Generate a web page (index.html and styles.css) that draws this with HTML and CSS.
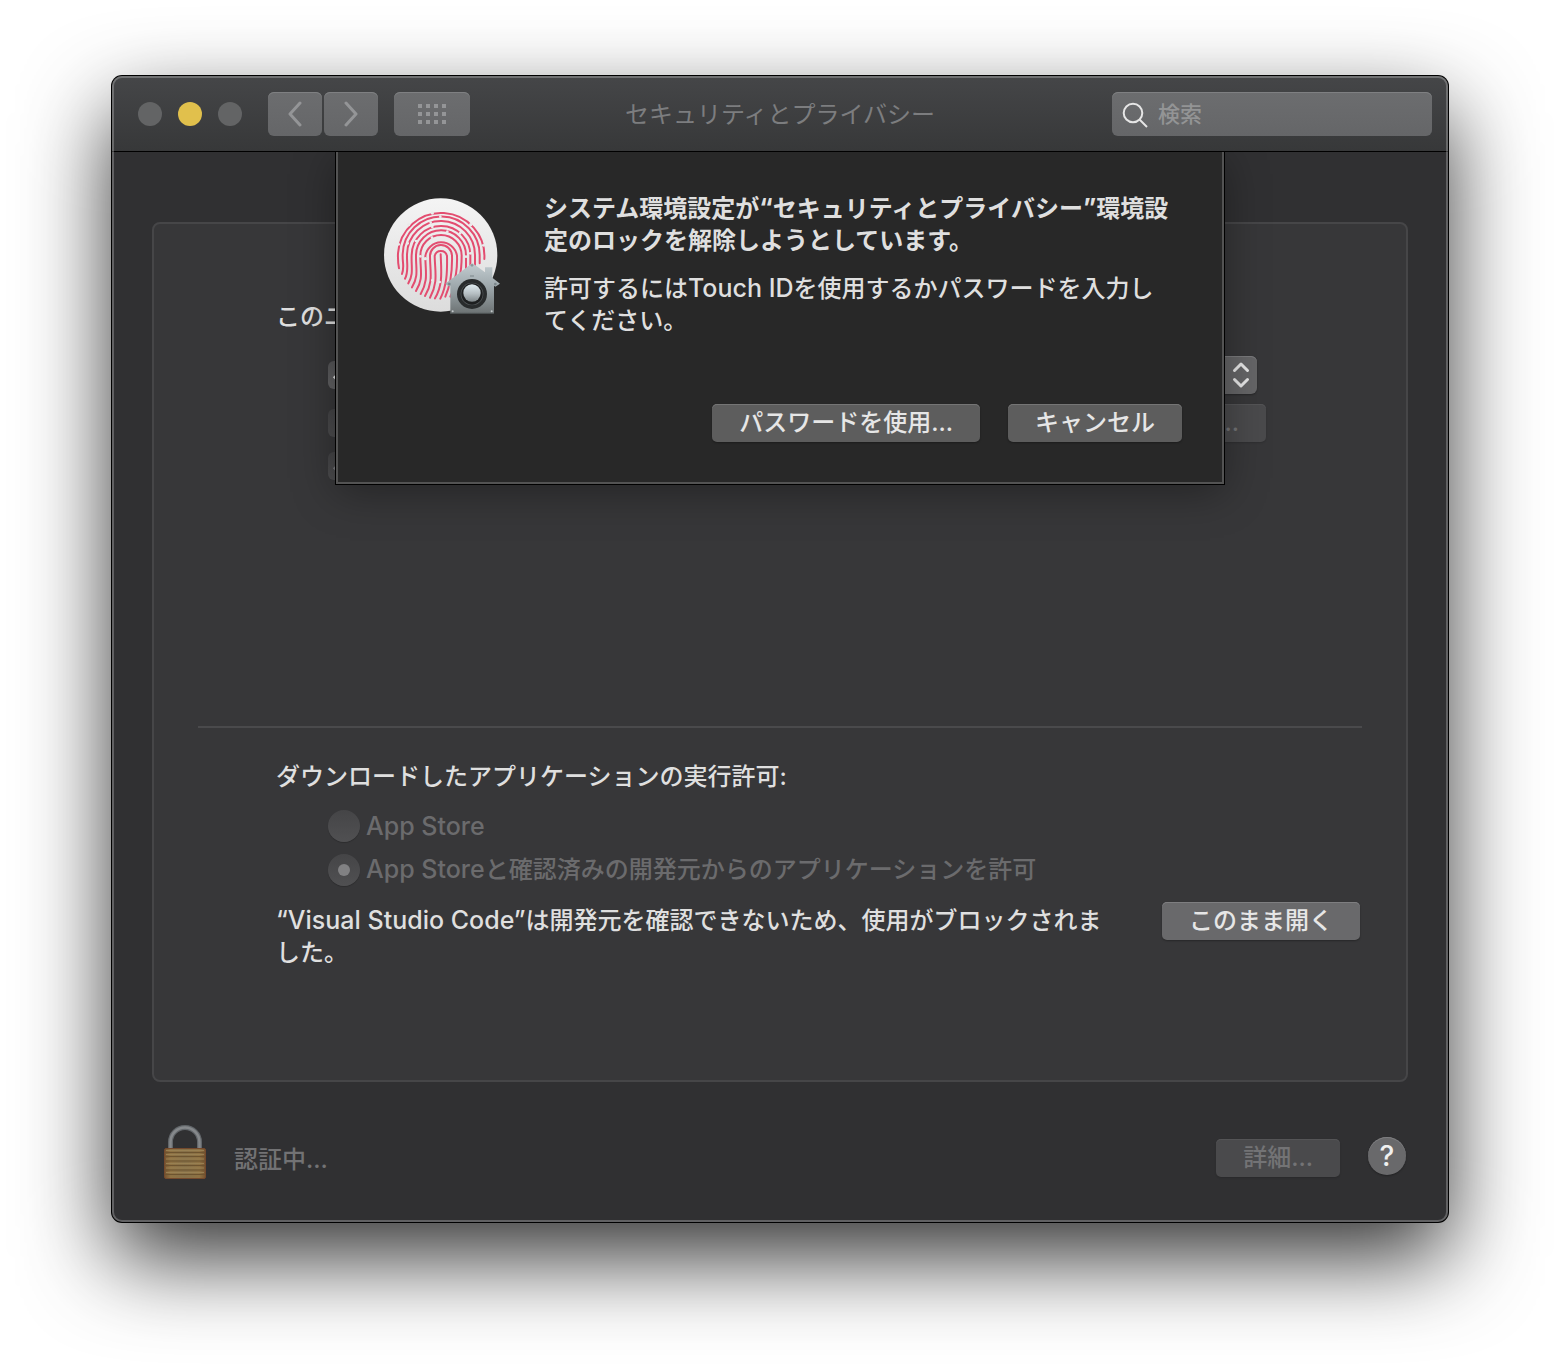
FILE: index.html
```html
<!DOCTYPE html>
<html lang="ja">
<head>
    <meta charset="UTF-8">
    <meta name="viewport" content="width=device-width, initial-scale=1.0">
    <title>セキュリティとプライバシー</title>
    <link rel="stylesheet" href="styles.css">
</head>
<body>
    <main class="window">
        <header class="titlebar">
            <div class="controls">
                <div class="lights">
                    <button class="light" aria-label="閉じる"></button>
                    <button class="light yellow" aria-label="しまう"></button>
                    <button class="light" aria-label="拡大"></button>
                </div>
                <div class="nav">
                    <button class="tool" aria-label="戻る">
                        <svg width="16" height="26" viewBox="0 0 16 26"><path d="M13 2 L3 13 L13 24" /></svg>
                    </button>
                    <button class="tool" aria-label="進む">
                        <svg width="16" height="26" viewBox="0 0 16 26"><path d="M3 2 L13 13 L3 24" /></svg>
                    </button>
                </div>
                <button class="tool wide" aria-label="すべてを表示">
                    <svg width="28" height="20" viewBox="0 0 28 20">
                        <path class="dots" d="M0 0h4v4h-4z M8 0h4v4h-4z M16 0h4v4h-4z M24 0h4v4h-4z M0 8h4v4h-4z M8 8h4v4h-4z M16 8h4v4h-4z M24 8h4v4h-4z M0 16h4v4h-4z M8 16h4v4h-4z M16 16h4v4h-4z M24 16h4v4h-4z" />
                    </svg>
                </button>
            </div>
            <h1>セキュリティとプライバシー</h1>
            <label class="search">
                <svg width="28" height="28" viewBox="0 0 28 28"><circle cx="11" cy="13" r="9.3" /><path d="M17.500 19.500 L25 27" /></svg>
                <input type="search" placeholder="検索" aria-label="検索">
            </label>
        </header>

        <div class="content">
            <section class="panel">
                <div class="login">
                    <p>このユーザ</p>
                    <div class="row">
                        <input type="checkbox" class="check" aria-label="パスワードを要求" checked>
                        <div class="select">
                            <select aria-label="時間"><option></option></select>
                            <svg width="18" height="28" viewBox="0 0 18 28"><path d="M2.5 9.500 L9 3 L15.500 9.500 M2.500 18.500 L9 25 L15.500 18.500" /></svg>
                        </div>
                    </div>
                    <div class="row message-row">
                        <input type="checkbox" class="check" aria-label="メッセージを表示" disabled>
                        <button class="button" aria-label="メッセージを設定" disabled>...</button>
                    </div>
                    <div class="row">
                        <input type="checkbox" class="check" aria-label="自動ログインを使用不可にする" checked disabled>
                    </div>
                </div>

                <hr>

                <div class="download">
                    <p>ダウンロードしたアプリケーションの実行許可:</p>
                    <div class="radios">
                        <label class="radio"><input type="radio" name="source" disabled><span class="latin">App Store</span></label>
                        <label class="radio"><input type="radio" name="source" checked disabled><span><span class="latin">App Store</span>と確認済みの開発元からのアプリケーションを許可</span></label>
                    </div>
                    <div class="blocked">
                        <p><span class="latin">“Visual Studio Code”</span>は開発元を確認できないため、使用がブロックされました。</p>
                        <button class="button open">このまま開く</button>
                    </div>
                </div>
            </section>

            <footer>
                <svg class="lock" width="46" height="56" viewBox="0 0 46 56">
                    <defs>
                        <linearGradient id="brass" x1="0" y1="0" x2="1" y2="0">
                            <stop offset="0" stop-color="#76522f" />
                            <stop offset="0.15" stop-color="#8f7243" />
                            <stop offset="0.5" stop-color="#857049" />
                            <stop offset="0.85" stop-color="#8f7243" />
                            <stop offset="1" stop-color="#76522f" />
                        </linearGradient>
                    </defs>
                    <path d="M8.500 26 V18 A14.500 14.500 0 0 1 37.500 18 V26" fill="none" stroke="#62666a" stroke-width="5" />
                    <path d="M8.500 26 V18 A14.500 14.500 0 0 1 37.500 18 V26" fill="none" stroke="#85888b" stroke-width="2.500" />
                    <rect x="2.500" y="24.500" width="41" height="30" rx="1.500" fill="url(#brass)" stroke="#74492c" stroke-width="1" />
                    <path d="M3 28.500H43 M3 32.500H43 M3 37H43 M3 41.500H43 M3 46H43 M3 50.500H43" stroke="#6d5430" stroke-width="1.200" />
                    <path d="M4 26.500H42 M4 30.500H42 M4 35H42 M4 39.500H42 M4 44H42 M4 48.500H42" stroke="#988052" stroke-width="1" />
                </svg>
                <span class="status">認証中...</span>
                <button class="button details" disabled>詳細...</button>
                <button class="help" aria-label="ヘルプ">?</button>
            </footer>

            <div class="sheet" role="dialog" aria-labelledby="sheetTitle">
                <div class="sheet-body">
                    <svg class="touch-id" width="120" height="120" viewBox="36 33 360 360">
                        <defs>
                            <linearGradient id="disc" x1="0" y1="0" x2="0" y2="1">
                                <stop offset="0" stop-color="#f4f4f4" />
                                <stop offset="1" stop-color="#dcdcdc" />
                            </linearGradient>
                            <linearGradient id="house" x1="0" y1="0" x2="0" y2="1">
                                <stop offset="0" stop-color="#c3cdd1" />
                                <stop offset="0.5" stop-color="#9ba5a9" />
                                <stop offset="1" stop-color="#6c7273" />
                            </linearGradient>
                            <linearGradient id="knob" x1="0" y1="0" x2="0" y2="1">
                                <stop offset="0" stop-color="#e0ecf1" />
                                <stop offset="0.55" stop-color="#b4bdc1" />
                                <stop offset="1" stop-color="#7f878a" />
                            </linearGradient>
                        </defs>
                        <circle cx="212" cy="210" r="170" fill="url(#disc)" />
                        <g class="ridges">
                            <path d="M87 250 Q83 230 84 205 A128 128 0 0 1 343 222" />
                            <path d="M96 267 C104 245 97 235 98 208 A115 115 0 0 1 329 212 V235" />
                            <path d="M105 281 C117 258 110 240 111 208 A102 102 0 0 1 315 212 V245" />
                            <path d="M115 295 C132 265 123 245 125 210 A88 88 0 0 1 301 212 V250" />
                            <path d="M126 307 C147 272 137 250 138 210 A75 75 0 0 1 288 212 V260" />
                            <path d="M138 318 C161 280 151 260 151 212 A62 62 0 0 1 275 212 C275 240 273 260 268 280" />
                            <path d="M152 327 C176 286 166 260 166 214 A48 48 0 0 1 261 212 C262 245 260 275 248 300" />
                            <path d="M165 333 C191 290 180 260 180 214 A33 33 0 0 1 246 212 C247 250 246 290 226 335" />
                            <path d="M180 338 C205 292 195 262 194 213 A19 19 0 0 1 231 213 C232 260 231 300 211 341" />
                            <path d="M195 340 C219 300 214 260 212 208" />
                            <path d="M241 335 L252 310" />
                        </g>
                        <g fill="#ebebeb">
                            <circle cx="187" cy="84" r="5" />
                            <circle cx="116" cy="119" r="5" />
                            <circle cx="302" cy="119" r="5" />
                            <circle cx="211" cy="95" r="4" />
                            <circle cx="182" cy="113" r="4" />
                            <circle cx="113" cy="175" r="4" />
                            <circle cx="86" cy="178" r="4" />
                            <circle cx="138" cy="168" r="4" />
                            <circle cx="187" cy="126" r="4" />
                            <circle cx="232" cy="140" r="4" />
                            <circle cx="186" cy="158" r="4" />
                            <circle cx="166" cy="221" r="5" />
                            <circle cx="151" cy="214" r="4" />
                            <circle cx="270" cy="145" r="4" />
                            <circle cx="301" cy="205" r="4" />
                            <circle cx="288" cy="215" r="4" />
                            <circle cx="340" cy="181" r="4" />
                            <circle cx="209" cy="291" r="4" />
                            <circle cx="187" cy="286" r="4" />
                        </g>
                        <path d="M307 234 L345 262 V247 H367 V278 L390 296 L376 305 L372 302 V386 H241 V302 L238 305 L226 296 Z" fill="url(#house)" />
                        <path d="M241 385 H372" stroke="#4a4f50" stroke-width="3" />
                        <circle cx="306" cy="241" r="4" fill="#8c979b" />
                        <circle cx="238" cy="297" r="4" fill="#7a8589" />
                        <circle cx="376" cy="297" r="4" fill="#7a8589" />
                        <circle cx="248" cy="379" r="3" fill="#c3c8c9" />
                        <circle cx="365" cy="379" r="3" fill="#c3c8c9" />
                        <path d="M300 273 H312" stroke="#7a8589" stroke-width="3" />
                        <circle cx="306" cy="327" r="45" fill="#292c2d" />
                        <circle cx="306" cy="327" r="34" fill="#555a5c" />
                        <circle cx="306" cy="327" r="32" fill="#1d1f20" />
                        <circle cx="306" cy="324" r="26" fill="url(#knob)" />
                    </svg>
                    <div class="sheet-text">
                        <h2 id="sheetTitle">システム環境設定が<span class="latin">“</span>セキュリティとプライバシー<span class="latin">”</span>環境設<br>定のロックを解除しようとしています。</h2>
                        <p>許可するには<span class="latin">Touch ID</span>を使用するかパスワードを入力し<br>てください。</p>
                    </div>
                </div>
                <div class="sheet-buttons">
                    <button class="button">パスワードを使用...</button>
                    <button class="button">キャンセル</button>
                </div>
            </div>
        </div>
    </main>
</body>
</html>
```
FILE: styles.css
```css
* {
    box-sizing: border-box;
}

body {
    margin: 0;
    padding: 76px 112px 148px;
    background-color: #fff;
    color: #dfdfdf;
    font-family: Inter, 'Noto Sans CJK JP', sans-serif;
    font-size: 24px;
    font-weight: 500;
    line-height: 32px;
}

h1, h2, p {
    margin: 0;
    font-size: 24px;
}

button, input, select {
    margin: 0;
    border: none;
    font: inherit;
    color: inherit;
}

.latin {
    font-size: 25px;
    line-height: 24px;
}

.window {
    position: relative;
    border-radius: 10px;
    background-color: #303032;
    box-shadow: 0 0 0 1px #000, 0 36px 88px rgba(0, 0, 0, 0.8);
}

/* light rim drawn over the window edge */
.window::after {
    content: "";
    position: absolute;
    inset: 0;
    border: 2px solid rgba(255, 255, 255, 0.24);
    border-radius: 10px;
    pointer-events: none;
}

/* Title bar */
.titlebar {
    display: grid;
    grid-template-columns: 1fr auto 1fr;
    align-items: center;
    padding: 16px 16px 15px;
    border-bottom: 1px solid #000;
    border-radius: 10px 10px 0 0;
    background: linear-gradient(#454648, #373839);
}

.titlebar h1 {
    padding-top: 2px;
    font-weight: 400;
    color: #7c7d7f;
}

.controls {
    display: flex;
    align-items: center;
    gap: 16px;
    margin-left: 10px;
}

.lights {
    display: flex;
    gap: 16px;
    margin-right: 10px;
}

.light {
    width: 24px;
    height: 24px;
    padding: 0;
    border-radius: 50%;
    background-color: #636465;
}

.light.yellow {
    background-color: #e1c04c;
}

.nav {
    display: flex;
    gap: 2px;
}

.tool {
    display: flex;
    align-items: center;
    justify-content: center;
    width: 54px;
    height: 44px;
    padding: 0;
    border-radius: 6px;
    background: linear-gradient(#6c6d6f, #656668);
    box-shadow: inset 0 1px 0 #7f8082;
}

.tool.wide {
    width: 76px;
}

.tool svg {
    fill: none;
    stroke: #949597;
    stroke-width: 3;
    stroke-linecap: round;
    stroke-linejoin: round;
}

.tool .dots {
    fill: #949597;
    stroke: none;
}

.search {
    display: flex;
    align-items: center;
    justify-self: end;
    gap: 8px;
    width: 320px;
    height: 44px;
    padding: 0 10px;
    border-radius: 6px;
    background: linear-gradient(#6c6d6f, #656668);
    box-shadow: inset 0 1px 0 #7f8082;
}

.search svg {
    flex: none;
    fill: none;
    stroke: #e6e6e6;
    stroke-width: 2;
}

.search input {
    flex: 1;
    min-width: 0;
    padding: 0;
    outline: none;
    background: none;
    font-size: 22px;
}

.search input::placeholder {
    color: #939495;
    opacity: 1;
}

/* Content */
.content {
    position: relative;
    padding: 70px 40px 42px;
}

.panel {
    padding: 77px 44px 111px;
    border: 2px solid #464648;
    border-radius: 8px;
    background-color: #373739;
}

.login {
    display: flex;
    flex-direction: column;
    gap: 10px;
    padding-left: 78px;
}

.login p {
    margin-bottom: 13px;
}

.row {
    display: flex;
    align-items: center;
    justify-content: space-between;
    padding: 0 105px 0 52px;
}

.message-row {
    padding-right: 96px;
}

.check {
    appearance: none;
    width: 28px;
    height: 28px;
    border-radius: 6px;
    background: linear-gradient(#555557, #626264);
}

.check:checked::after {
    content: "";
    display: block;
    width: 16px;
    height: 8px;
    margin: 8px 6px;
    border-left: 3px solid #dfdfdf;
    border-bottom: 3px solid #dfdfdf;
    transform: rotate(-45deg);
}

.check:disabled {
    background: linear-gradient(#444446, #4c4c4e);
}

.check:checked:disabled::after {
    border-color: #77777a;
}

.select {
    position: relative;
    width: 320px;
}

.select select {
    display: block;
    appearance: none;
    width: 100%;
    height: 38px;
    border-radius: 6px;
    background-color: #656567;
    box-shadow: inset 0 1px 0 #7a7a7c, 0 1px 2px rgba(0, 0, 0, 0.3);
}

.select svg {
    position: absolute;
    top: 5px;
    right: 7px;
    fill: none;
    stroke: #e6e6e6;
    stroke-width: 3;
    stroke-linecap: round;
    stroke-linejoin: round;
    pointer-events: none;
}

.button {
    height: 38px;
    padding: 0 27px 1px;
    border-radius: 5px;
    background-color: #69696b;
    box-shadow: inset 0 1px 0 #7e7e80, 0 1px 2px rgba(0, 0, 0, 0.3);
    color: #e6e6e6;
    white-space: nowrap;
}

.button:disabled {
    background-color: #4a4a4c;
    box-shadow: inset 0 1px 0 #545456, 0 1px 2px rgba(0, 0, 0, 0.15);
    color: #737375;
}

.message-row .button {
    width: 160px;
    text-align: right;
}

hr {
    height: 2px;
    margin: 246px 0 33px;
    border: none;
    background-color: #4a4a4c;
}

.download {
    padding-left: 78px;
}

.radios {
    display: flex;
    flex-direction: column;
    gap: 12px;
    margin: 17px 0 16px;
    padding-left: 52px;
}

.radio {
    display: flex;
    align-items: center;
    gap: 6px;
    color: #6b6b6d;
}

.radio input {
    display: grid;
    place-items: center;
    appearance: none;
    width: 32px;
    height: 32px;
    border-radius: 50%;
    background: linear-gradient(#454547, #505052);
    box-shadow: 0 1px 1px rgba(0, 0, 0, 0.2);
}

.radio input:checked::after {
    content: "";
    width: 12px;
    height: 12px;
    border-radius: 50%;
    background-color: #818183;
}

.blocked {
    display: flex;
    align-items: flex-start;
    justify-content: space-between;
    gap: 48px;
    padding-right: 2px;
}

.blocked p {
    padding-top: 3px;
}

.open {
    flex: none;
}

/* Bottom bar */
footer {
    display: flex;
    align-items: center;
    padding: 42px 2px 0 10px;
}

.status {
    margin: 16px auto 0 26px;
    color: #727274;
}

.details {
    margin: 12px 28px 0 0;
}

.help {
    width: 38px;
    height: 38px;
    margin-top: 8px;
    padding: 0;
    border-radius: 50%;
    background-color: #69696b;
    box-shadow: inset 0 1px 0 #7e7e80, 0 1px 2px rgba(0, 0, 0, 0.3);
    color: #f0f0f0;
    font-size: 28px;
}

/* Authentication sheet hanging from the title bar */
.sheet {
    position: absolute;
    top: 0;
    left: 50%;
    width: 888px;
    padding: 41px 40px 40px 44px;
    border: 2px solid #535353;
    border-top: none;
    background-color: #282828;
    box-shadow: 0 0 0 1px #000, 0 8px 40px rgba(0, 0, 0, 0.35);
    clip-path: inset(0 -80px -80px);
    transform: translateX(-50%);
}

.sheet-body {
    display: flex;
    gap: 42px;
}

.touch-id {
    flex: none;
    margin-top: 3px;
}

.sheet-text h2 {
    margin-bottom: 16px;
    font-weight: 700;
    white-space: nowrap;
}

.ridges {
    fill: none;
    stroke: #e34d70;
    stroke-width: 6;
    stroke-linecap: round;
}

.sheet-buttons {
    display: flex;
    justify-content: flex-end;
    gap: 28px;
    margin-top: 67px;
}

.sheet-buttons .button {
    background-color: #5d5d5d;
    box-shadow: inset 0 1px 0 #757575, 0 1px 2px rgba(0, 0, 0, 0.3);
}
```
